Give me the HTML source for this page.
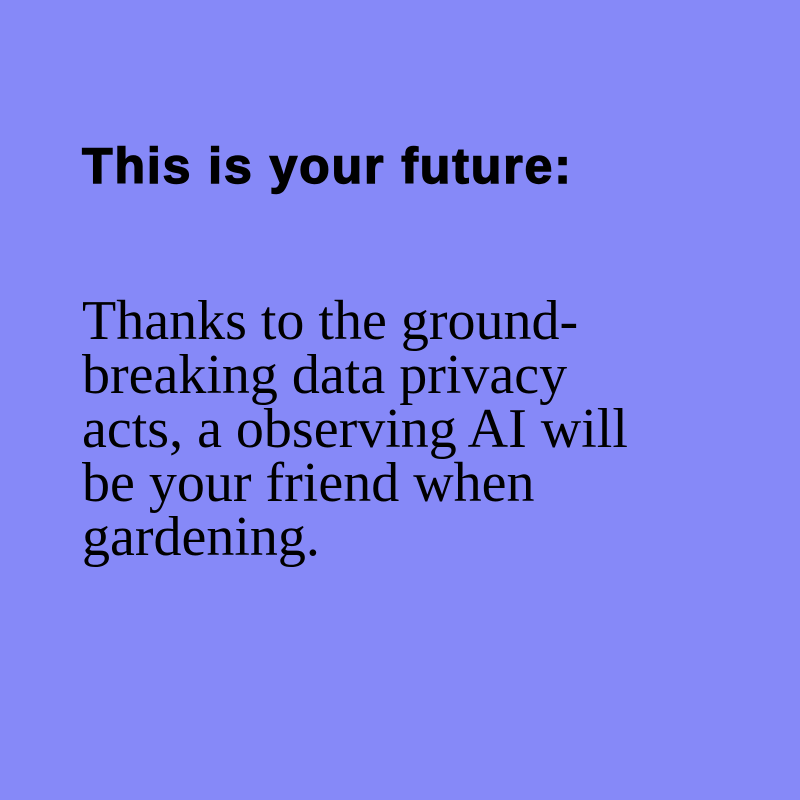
<!DOCTYPE html>
<html><head><meta charset="utf-8"><style>
html,body{margin:0;padding:0}
body{width:800px;height:800px;background:#8689f8;position:relative;overflow:hidden}
h1{position:absolute;left:82px;top:141px;margin:0;font-family:"Liberation Sans",Arial,sans-serif;font-weight:bold;font-size:50px;line-height:50px;letter-spacing:1.9px;-webkit-text-stroke:1.4px #000;color:#000;white-space:nowrap}
p{position:absolute;left:82px;top:294px;margin:0;width:600px;font-family:"Liberation Serif","Times New Roman",serif;font-size:56px;line-height:54px;color:#000}
</style></head><body>
<h1>This is your future:</h1>
<p>Thanks to the ground-<br>breaking data privacy<br>acts, a observing AI will<br>be your friend when<br>gardening.</p>
</body></html>
